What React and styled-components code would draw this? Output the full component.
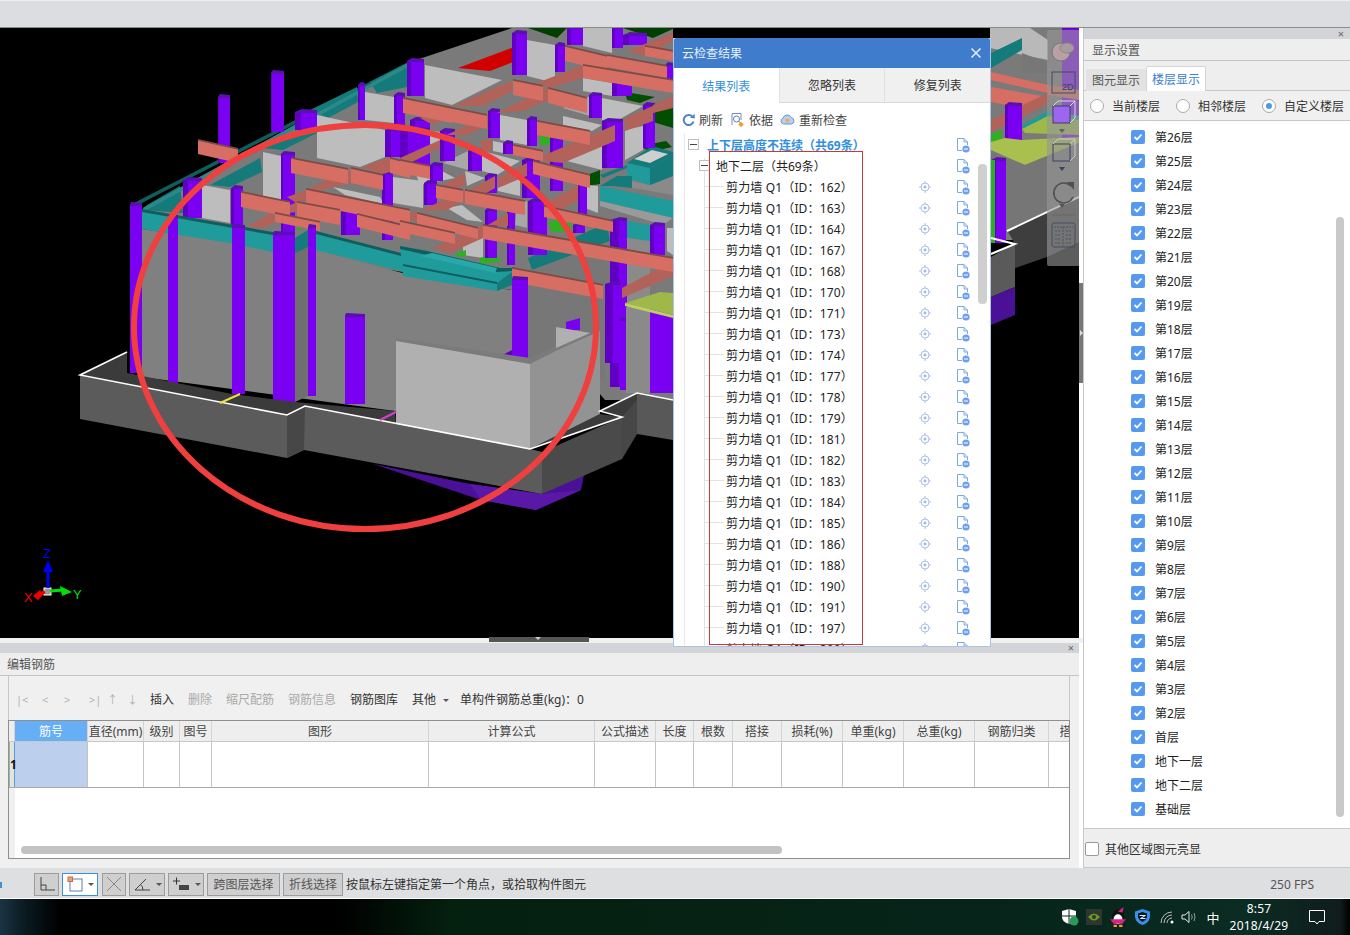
import React from "react";
import styled, { createGlobalStyle } from "styled-components";

const FONT = `"Noto Sans", "Noto Sans CJK SC", "Liberation Sans", sans-serif`;

const Global = createGlobalStyle`
  html, body { margin: 0; padding: 0; background: #fff; }
  body { font-family: ${FONT}; font-size: 12px; color: #222; overflow: hidden; }
  * { box-sizing: border-box; }
`;

const Page = styled.div`
  position: relative;
  width: 1350px;
  height: 935px;
  display: flex;
  flex-direction: column;
  overflow: hidden;
`;
const TopBar = styled.div`
  height: 28px;
  flex: none;
  background: #dcdde0;
  border-top: 1px solid #eee;
  border-bottom: 1px solid #8c8c8c;
`;
const Main = styled.div`
  height: 840px;
  flex: none;
  display: flex;
  background: #fff;
`;
const LeftCol = styled.div`
  width: 1083px;
  flex: none;
  display: flex;
  flex-direction: column;
  background: #fff;
`;
const Viewport = styled.div`
  position: relative;
  width: 1079px;
  height: 610px;
  flex: none;
  background: #000;
  overflow: hidden;
`;
const SceneSvg = styled.svg`
  display: block;
`;
const SideHandle = styled.div`
  position: absolute;
  left: 1079px;
  top: 283px;
  width: 4px;
  height: 100px;
  background: #777;
  &::after {
    content: "";
    position: absolute;
    left: 1px;
    top: 47px;
    border: 3px solid transparent;
    border-left-color: #ddd;
  }
`;
const BottomHandle = styled.div`
  position: absolute;
  left: 489px;
  top: 637px;
  width: 100px;
  height: 5px;
  background: #555;
  &::after {
    content: "";
    position: absolute;
    left: 46px;
    top: 0;
    border: 3px solid transparent;
    border-top-color: #ccc;
  }
`;
const FloatTools = styled.div`
  position: absolute;
  left: 1047px;
  top: 2px;
  width: 32px;
  height: 236px;
  background: rgba(150, 150, 150, 0.62);
  border-radius: 2px 0 0 2px;
  display: flex;
  flex-direction: column;
  align-items: center;
`;
const Gap = styled.div`
  height: 5px;
  flex: none;
  background: #f1f1f1;
`;
const Editor = styled.div`
  flex: 1;
  display: flex;
  flex-direction: column;
  width: 1079px;
  background: #f0f0f0;
`;
const DockStrip = styled.div`
  height: ${(p) => p.$h}px;
  flex: none;
  background: #d3d4d8;
  display: flex;
  justify-content: flex-end;
  align-items: center;
  padding-right: ${(p) => p.$pad}px;
  color: #666;
  font-size: 11px;
  line-height: 10px;
`;
const DockTitle = styled.div`
  height: ${(p) => p.$h}px;
  flex: none;
  padding-left: ${(p) => p.$pad}px;
  padding-top: ${(p) => p.$top || 0}px;
  line-height: ${(p) => p.$h - (p.$top || 0)}px;
  color: #555;
  font-size: 12px;
  background: #eeeeee;
  border-bottom: 1px solid #c2c4c8;
`;
const EditorTools = styled.div`
  height: 44px;
  flex: none;
  margin: 0 9px 0 8px;
  padding: 2px 0 0 7px;
  display: flex;
  align-items: center;
  border-left: 1px solid #c8c8c8;
  border-right: 1px solid #c8c8c8;
`;
const NavGlyph = styled.span`
  color: #b0b0b0;
  font-size: 11px;
  width: ${(p) => p.$w}px;
  flex: none;
`;
const ToolText = styled.span`
  color: ${(p) => (p.$off ? "#aaa" : "#333")};
  margin-right: ${(p) => p.$mr ?? 14}px;
  white-space: nowrap;
  flex: none;
`;
const Caret = styled.span`
  display: inline-block;
  margin-left: ${(p) => p.$ml ?? 7}px;
  vertical-align: middle;
  border: 3px solid transparent;
  border-top-color: #555;
  border-bottom-width: 0;
`;
const Table = styled.div`
  width: 1062px;
  height: 139px;
  margin-left: 8px;
  flex: none;
  display: flex;
  flex-direction: column;
  border: 1px solid #8f8f8f;
  background: #fff;
  overflow: hidden;
`;
const COLS = "6px 73px 56px 36px 32px 217px 166px 61px 38px 39px 49px 61px 61px 71px 74px 70px";
const HeadRow = styled.div`
  display: grid;
  grid-template-columns: ${COLS};
  height: 21px;
  flex: none;
  background: #eeeeee;
  border-bottom: 1px solid #c8c8c8;
`;
const HeadCell = styled.div`
  display: flex;
  align-items: center;
  justify-content: center;
  white-space: nowrap;
  overflow: hidden;
  color: ${(p) => (p.$on ? "#fff" : "#444")};
  background: ${(p) => (p.$on ? "#66aef5" : "transparent")};
  border-right: 1px solid #d4d4d4;
`;
const BodyRow = styled.div`
  display: grid;
  grid-template-columns: ${COLS};
  grid-template-rows: 45px;
  height: 46px;
  flex: none;
  border-bottom: 1px solid #aaa;
  background: #aaa;
`;
const BodyCell = styled.div`
  background: ${(p) => (p.$on ? "#bcd0ee" : "#fff")};
  border-right: 1px solid #c4c4c4;
`;
const RowHead = styled.div`
  position: relative;
  z-index: 1;
  background: #dfe6df;
  border-left: 1px solid #9db89d;
  border-right: 1px solid #5d9adf;
  font-weight: 700;
  font-size: 12px;
  line-height: 46px;
  color: #111;
  white-space: nowrap;
`;
const TableFill = styled.div`
  flex: 1;
  display: flex;
  flex-direction: column;
  justify-content: flex-end;
  padding: 0 0 4px 12px;
  background: linear-gradient(90deg, #f0f0f0 6px, #fff 6px);
`;
const HBar = styled.div`
  width: 761px;
  height: 8px;
  border-radius: 4px;
  background: #c2c2c2;
`;
const RightPanel = styled.div`
  width: 267px;
  flex: none;
  display: flex;
  flex-direction: column;
  border-left: 1px solid #c8c8c8;
  background: #eeeeee;
  border-bottom: 1px solid #c8c8c8;
`;
const TabRow = styled.div`
  height: 30px;
  flex: none;
  display: flex;
  align-items: flex-end;
  padding-left: 2px;
  background: #eeeeee;
  border-bottom: 1px solid #c8c8c8;
`;
const SideTab = styled.div`
  height: ${(p) => (p.$on ? 25 : 22)}px;
  width: 60px;
  margin-bottom: -1px;
  display: flex;
  align-items: center;
  justify-content: center;
  color: ${(p) => (p.$on ? "#3d80d0" : "#555")};
  background: ${(p) => (p.$on ? "#fff" : "#e2e2e2")};
  border: ${(p) => (p.$on ? "1px solid #d5d5d5" : "none")};
  border-bottom: none;
  border-radius: 2px 2px 0 0;
`;
const RadioRow = styled.div`
  height: 30px;
  flex: none;
  display: flex;
  align-items: center;
  padding-left: 6px;
  gap: 16px;
  background: #f0f0f0;
  border-bottom: 1px solid #c8c8c8;
`;
const RadioItem = styled.label`
  display: flex;
  align-items: center;
  gap: 8px;
  color: #333;
  white-space: nowrap;
`;
const RadioDot = styled.span`
  width: 14px;
  height: 14px;
  border-radius: 50%;
  border: 1px solid #a9a9a9;
  background: #fff;
  display: flex;
  align-items: center;
  justify-content: center;
  &::after {
    content: "";
    width: 6px;
    height: 6px;
    border-radius: 50%;
    background: ${(p) => (p.$on ? "#4d97f0" : "transparent")};
  }
`;
const FloorList = styled.div`
  position: relative;
  height: 708px;
  flex: none;
  padding: 4px 0 0 47px;
  background: #fff;
  border-bottom: 1px solid #c8c8c8;
`;
const FloorRow = styled.div`
  height: 24px;
  display: flex;
  align-items: center;
  gap: 10px;
  color: #222;
`;
const Check = styled.span`
  width: 14px;
  height: 14px;
  flex: none;
  border-radius: 2px;
  background: #559af0;
  display: flex;
  align-items: center;
  justify-content: center;
`;
const VBar = styled.div`
  position: absolute;
  left: 252px;
  top: 96px;
  width: 8px;
  height: 600px;
  border-radius: 4px;
  background: #c9c9c9;
`;
const PanelFoot = styled.div`
  flex: 1;
  display: flex;
  align-items: center;
  padding: 2px 0 0 1px;
  gap: 6px;
  color: #333;
`;
const EmptyBox = styled.span`
  width: 14px;
  height: 14px;
  border: 1px solid #999;
  border-radius: 2px;
  background: #fff;
`;
const StatusBar = styled.div`
  height: 30px;
  flex: none;
  display: flex;
  align-items: center;
  background: #dedfe1;
  padding: 2px 0 0 34px;
  position: relative;
`;
const StatusTick = styled.span`
  position: absolute;
  left: 0;
  top: 14px;
  width: 2px;
  height: 6px;
  background: #3f8fd8;
`;
const StatusBtn = styled.button`
  width: ${(p) => p.$w}px;
  height: 23px;
  flex: none;
  margin-right: ${(p) => p.$mr ?? 3}px;
  padding: 0;
  font: inherit;
  color: #555;
  display: flex;
  align-items: center;
  justify-content: center;
  gap: 4px;
  background: ${(p) => (p.$on ? "#fff" : "#cfcfd0")};
  border: 1px solid ${(p) => (p.$on ? "#3d8edc" : "#9c9c9c")};
  white-space: nowrap;
`;
const StatusHint = styled.span`
  color: #333;
  white-space: nowrap;
`;
const Fps = styled.span`
  margin-left: auto;
  margin-right: 36px;
  color: #555;
`;
const Taskbar = styled.div`
  height: 37px;
  flex: none;
  display: flex;
  align-items: center;
  justify-content: flex-end;
  color: #fff;
  background: linear-gradient(90deg, #1b3444 0, #0a1a20 25px, #000 60px, #000 340px, #04200f 450px, #06241a 1000px, #0a2c22 1250px, #101c1c 1340px, #000 1350px);
  border-top: 1px solid #fff;
`;
const Tray = styled.div`
  display: flex;
  align-items: center;
  padding-right: 7px;
`;
const TraySlot = styled.span`
  width: ${(p) => p.$w}px;
  flex: none;
  display: flex;
  justify-content: center;
  align-items: center;
  font-size: ${(p) => p.$fs || 12}px;
`;
const Clock = styled.div`
  width: 64px;
  text-align: center;
  font-size: 12px;
  line-height: 17px;
  letter-spacing: 0.2px;
`;
const Dialog = styled.div`
  position: absolute;
  left: 673px;
  top: 38px;
  width: 318px;
  height: 609px;
  display: flex;
  flex-direction: column;
  background: #fff;
  border: 1px solid #a9c6e8;
  border-top: none;
  overflow: hidden;
  z-index: 3;
`;
const DialogTitle = styled.div`
  height: 30px;
  flex: none;
  display: flex;
  align-items: center;
  justify-content: space-between;
  padding: 0 8px 0 8px;
  color: #e6f0fb;
  background: #3f7ccb;
  border-radius: 2px 2px 0 0;
`;
const DialogTabs = styled.div`
  height: 35px;
  flex: none;
  display: flex;
  background: #f0f0f0;
`;
const DialogTab = styled.div`
  flex: 1;
  display: flex;
  align-items: center;
  justify-content: center;
  color: ${(p) => (p.$on ? "#2f8fe0" : "#333")};
  background: ${(p) => (p.$on ? "#fff" : "#f0f0f0")};
  border-left: ${(p) => (p.$first ? "none" : "1px solid #e2e2e2")};
  border-bottom: ${(p) => (p.$on ? "none" : "1px solid #dadada")};
`;
const DialogTools = styled.div`
  height: 31px;
  flex: none;
  display: flex;
  align-items: center;
  padding: 2px 0 0 8px;
  color: #444;
`;
const DTool = styled.span`
  display: flex;
  align-items: center;
  gap: 4px;
  margin-right: ${(p) => p.$mr}px;
  white-space: nowrap;
`;
const Tree = styled.div`
  position: relative;
  flex: 1;
  overflow: hidden;
  &::before {
    content: "";
    position: absolute;
    left: 10px;
    top: 0;
    bottom: 0;
    border-left: 1px solid #e6e6e6;
  }
  &::after {
    content: "";
    position: absolute;
    left: 30px;
    top: 24px;
    bottom: 0;
    border-left: 1px solid #e2e2e2;
  }
`;
const TreeRow = styled.div`
  position: relative;
  height: 21px;
  display: flex;
  align-items: center;
  padding-left: ${(p) => p.$indent}px;
  padding-right: 20px;
  color: ${(p) => p.$color || "#222"};
  font-weight: ${(p) => (p.$bold ? 700 : 400)};
  white-space: nowrap;
  ${(p) =>
    p.$leaf &&
    `&::before { content: ""; position: absolute; left: 30px; top: 10px; width: 20px; border-top: 1px solid #e2e2e2; }`}
`;
const Expander = styled.span`
  position: relative;
  z-index: 1;
  width: 11px;
  height: 11px;
  flex: none;
  margin-right: ${(p) => p.$mr}px;
  border: 1px solid #c0c0c0;
  background: #fff;
  &::after {
    content: "";
    position: absolute;
    left: 1px;
    right: 1px;
    top: 4px;
    border-top: 1px solid #444;
  }
`;
const TreeLabel = styled.span`
  flex: 1;
  letter-spacing: ${(p) => (p.$wide ? "0.15px" : "0")};
`;
const IconSlot = styled.span`
  width: 14px;
  height: 16px;
  flex: none;
  display: flex;
  margin-left: ${(p) => p.$ml || 0}px;
`;
const RedFrame = styled.div`
  position: absolute;
  left: 35px;
  top: 17px;
  width: 154px;
  height: 494px;
  border: 1px solid #c83a3a;
  pointer-events: none;
  z-index: 2;
`;
const TreeBar = styled.div`
  position: absolute;
  left: 304px;
  top: 30px;
  width: 9px;
  height: 140px;
  border-radius: 4px;
  background: #cfcfcf;
  z-index: 2;
`;

/* ---------- 3D scene (drawing) ---------- */
const C = {
  p: "#7a00f2", pd: "#6100c4", pt: "#5a10b0",
  gl: "#bdbdbd",
  s: "#d66e64", sd: "#b3625a", sl: "#7d4a44",
  t: "#1f9b9b", td: "#157a7a", tk: "#0f5e5e",
};
const poly = (fill, pts) => ({ fill, pts });
const col = (x, y1, w, y2, r = 0.25) => {
  const sw = Math.round(w * r);
  return [
    poly(C.pd, `${x},${y1} ${x + sw},${y1} ${x + sw},${y2} ${x},${y2}`),
    poly(C.p, `${x + sw},${y1} ${x + w},${y1 + 1} ${x + w},${y2} ${x + sw},${y2}`),
    poly(C.pt, `${x},${y1} ${x + sw + 1},${y1 - 3} ${x + w},${y1 - 2} ${x + w},${y1 + 1} ${x + sw},${y1 + 1}`),
  ];
};
const bx = (x1, y1, x2, y2, h) => [
  poly(C.s, `${x1},${y1} ${x2},${y2} ${x2},${y2 + h} ${x1},${y1 + h}`),
  poly(C.sl, `${x1},${y1 - 1} ${x2},${y2 - 1} ${x2},${y2 + 0.8} ${x1},${y1 + 0.8}`),
];
const by = (pts) => [poly(C.sd, pts)];
const light = (pts) => poly(C.gl, pts);

const shapes = [
  // interior
  poly("#7a7a7a", "143,208 410,62 512,28 673,28 673,400 605,400 512,290 142,229"),
  poly("#003f00", "528,28 567,28 557,38"),
  poly("#003f00", "623,28 675,28 653,38"),
  poly("#d00000", "458,68 517,46 518,60 490,71"),
  poly("#004f00", "625,92 655,97 640,103 627,100"),
  poly("#004f00", "653,108 673,106 673,128 653,122"),
  poly("#004f00", "640,146 666,141 672,147 650,152"),
  poly("#004f00", "587,175 600,170 600,184 587,186"),
  // teal wall top (back left)
  poly(C.tk, "130,205 410,61 410,65 130,209"),
  poly(C.td, "147,205 180,186 183,213 143,210"),
  poly(C.td, "210,185 260,158 262,172 230,187"),
  poly(C.td, "263,148 317,121 317,133 283,150"),
  poly(C.td, "310,110 357,87 358,102 328,118"),
  poly(C.td, "370,82 407,63 407,87 377,93"),
  poly("#2a8a8a", "143,208 410,62 410,66 143,212"),
  // light panels
  light("202,185 230,190 230,223 202,218"),
  light("263,152 281,156 281,212 263,210"),
  light("317,115 385,130 385,157 360,167 317,158"),
  light("365,92 394,97 394,123 365,120"),
  light("333,187 380,197 384,204 345,195"),
  light("393,177 423,181 423,208 393,203"),
  light("425,65 502,80 452,105 425,98"),
  light("527,40 555,45 555,83 527,76"),
  light("583,28 612,28 612,53 583,46"),
  light("583,78 612,83 612,96 583,91"),
  light("500,115 527,120 527,145 500,140"),
  light("602,98 643,106 613,123 602,120"),
  light("563,116 602,125 592,131 563,125"),
  poly("#a8a8a8", "563,108 590,96 590,116"),
  light("625,130 643,126 643,150 625,160"),
  light("563,160 602,145 602,170"),
  light("482,151 520,161 497,175 482,171"),
  poly("#a8a8a8", "443,163 468,151 468,170"),
  light("493,141 503,143 503,153 493,151"),
  light("447,208 462,205 483,222 467,220"),
  light("498,181 520,175 520,196 498,191"),
  light("465,171 485,178 467,186"),
  poly("#a8a8a8", "517,205 527,201 527,228 515,225"),
  light("587,185 598,186 598,213 585,208"),
  light("667,228 673,228 673,255 667,251"),
  light("463,241 483,236 483,258 463,255"),
  light("410,127 440,132 440,145 425,147 410,142"),
  light("415,172 440,170 455,178 420,185"),
  // greens
  poly("#2fb020", "540,136 550,135 550,145 540,145"),
  poly("#2fb020", "548,222 570,215 572,232 552,232"),
  poly("#2fb020", "480,258 497,252 500,262 480,264"),
  poly("#2fb020", "456,253 466,250 466,256 456,257"),
  poly("#2fb020", "296,228 303,224 300,231"),
  // right teal boxes
  poly("#8a8a8a", "632,181 650,185 673,176 673,195 650,191 632,188"),
  poly(C.td, "600,175 627,165 627,168 603,178"),
  poly(C.t, "627,163 650,168 650,185 627,178"),
  poly(C.td, "650,168 673,155 673,176 650,185"),
  poly(C.td, "627,163 652,146 673,152 673,155 650,168"),
  poly("#cfcfcf", "634,159 652,150 668,154 650,163"),
  poly(C.t, "600,186 673,201 673,218 600,201"),
  poly(C.td, "600,186 617,176 632,176 632,188 613,186"),
  poly("#9a9a9a", "600,201 673,218 663,225 600,206"),
  poly(C.td, "528,258 607,223 610,241 532,270"),
  poly("#777", "532,270 610,241 610,290 532,280"),
  poly(C.t, "627,221 650,225 650,241 627,238"),
  poly("#8a8a8a", "627,238 650,241 650,393 627,393"),
  // back columns
  ...col(358, 85, 7, 120), ...col(394, 95, 11, 127), ...col(385, 130, 25, 157),
  ...col(407, 61, 17, 96), ...col(512, 33, 15, 75), ...col(555, 45, 10, 72),
  ...col(567, 28, 16, 45), ...col(612, 28, 11, 48), ...col(623, 35, 24, 45),
  ...col(612, 83, 20, 96), ...col(589, 95, 13, 118), ...col(488, 111, 12, 138),
  ...col(527, 119, 10, 146), ...col(602, 121, 21, 168), ...col(643, 105, 12, 148),
  ...col(665, 65, 8, 81), ...col(430, 165, 13, 181), ...col(440, 131, 15, 161),
  ...col(468, 151, 14, 171), ...col(503, 143, 10, 154), ...col(522, 160, 18, 198),
  ...col(424, 183, 13, 205), ...col(485, 176, 12, 193), ...col(550, 138, 13, 191),
  ...col(528, 201, 19, 255), ...col(507, 211, 8, 265), ...col(485, 210, 12, 258),
  ...col(578, 183, 9, 225), ...col(573, 225, 12, 233), ...col(610, 220, 17, 387, 0.5),
  ...col(650, 225, 15, 255), ...col(295, 112, 22, 130), ...col(341, 210, 19, 235),
  ...col(382, 173, 11, 240), ...col(410, 120, 20, 175), ...col(400, 130, 30, 160),
  ...col(231, 188, 12, 227), ...col(183, 180, 19, 218), ...col(281, 154, 14, 233, 0.15),
  ...col(650, 310, 23, 393, 0),
  poly("#8a8a8a", "626,307 650,307 650,393 626,393"),
  // tall stubs
  ...col(218, 97, 12, 163, 0.1),
  ...col(271, 73, 13, 132, 0.1),
  // y beams
  ...by("400,158 440,140 440,148 400,168"),
  ...by("420,118 452,106 452,115 433,125"),
  ...by("453,106 512,81 512,91 483,106"),
  ...by("497,113 548,88 548,100 523,111"),
  ...by("537,83 583,65 583,78 550,88"),
  ...by("583,56 607,55 607,66 583,65"),
  ...by("627,51 673,33 673,41 645,56"),
  ...by("447,135 488,115 488,125 467,135"),
  ...by("533,160 615,125 615,141 563,163"),
  ...by("625,118 653,106 653,121 625,131"),
  ...by("653,105 673,96 673,108 653,113"),
  ...by("480,141 492,139 492,150 483,151"),
  ...by("498,178 527,163 527,176 498,188"),
  ...by("468,191 495,176 495,188 483,195"),
  ...by("420,211 465,190 465,200 447,210"),
  ...by("443,185 465,173 465,185 457,188"),
  ...by("543,205 578,185 578,201 560,210"),
  ...by("433,248 483,225 483,238 450,253"),
  ...by("488,225 508,213 508,226 503,226"),
  ...by("400,218 417,211 417,220 407,221"),
  ...by("622,288 673,261 673,276 622,298"),
  ...by("307,190 350,168 351,183 320,190"),
  ...by("287,197 307,190 306,200 295,202"),
  ...by("247,227 273,212 275,222 263,228"),
  ...by("362,167 390,157 390,172 383,174"),
  ...by("275,212 297,202 297,212 287,213"),
  ...by("397,217 410,212 410,220 400,221"),
  // x beams
  ...bx(198, 140, 238, 149, 14),
  ...bx(291, 158, 348, 169, 15),
  ...bx(351, 168, 383, 175, 15),
  ...bx(390, 158, 410, 163, 15),
  ...bx(241, 192, 290, 202, 15),
  ...bx(306, 189, 410, 210, 15),
  ...bx(297, 202, 340, 210, 15),
  ...bx(275, 213, 320, 222, 9),
  ...bx(357, 214, 410, 227, 13),
  ...bx(565, 46, 607, 56, 15),
  ...bx(607, 55, 667, 66, 12),
  ...bx(583, 65, 673, 80, 13),
  ...bx(645, 46, 673, 51, 10),
  ...bx(513, 80, 543, 86, 15),
  ...bx(548, 88, 587, 98, 15),
  ...bx(403, 98, 452, 108, 15),
  ...bx(452, 108, 487, 115, 14),
  ...bx(537, 121, 590, 131, 14),
  ...bx(513, 145, 543, 151, 10),
  ...bx(400, 160, 430, 166, 13),
  ...bx(533, 161, 590, 175, 13),
  ...bx(436, 185, 463, 190, 13),
  ...bx(465, 190, 525, 201, 14),
  ...bx(544, 206, 613, 221, 11),
  ...bx(417, 213, 478, 228, 11),
  ...bx(400, 221, 455, 233, 11),
  ...bx(483, 225, 673, 258, 14),
  // front wall
  poly("#808080", "142,229 295,252 316,250 410,275 512,290 512,400 395,411 142,377"),
  poly("#6f6f6f", "295,252 308,247 308,396 295,402"),
  poly(C.t, "142,211 230,227 273,235 295,238 295,253 273,252 230,243 142,229"),
  poly(C.tk, "142,209 295,236 295,239 142,212"),
  poly(C.td, "295,238 308,230 308,247 295,253"),
  poly(C.t, "316,232 405,255 405,272 316,250"),
  poly(C.tk, "316,231 405,254 405,257 316,234"),
  // teal block
  poly(C.t, "400,246 427,251 500,268 512,268 512,285 497,291 403,276"),
  poly(C.tk, "400,246 427,251 500,268 512,268 512,271 497,272 427,255 400,249"),
  poly("#28a8a8", "432,253 497,268 495,273 420,256"),
  poly(C.tk, "403,264 497,282 497,284 403,266"),
  poly(C.td, "497,283 512,272 512,285 497,291"),
  // right of front wall
  poly("#777", "528,280 605,293 605,380 528,360"),
  // x beam in front
  ...bx(512, 268, 603, 285, 14),
  // olive
  poly("#9fb84a", "625,303 660,292 673,293 673,315"),
  poly("#c0d060", "625,303 673,315 673,318 625,306"),
  // front columns
  ...col(130, 205, 12, 373, 0),
  ...col(168, 217, 10, 383, 0),
  ...col(232, 227, 13, 394, 0),
  ...col(273, 234, 22, 402, 0),
  ...col(308, 227, 8, 396, 0),
  ...col(345, 316, 20, 404, 0),
  ...col(512, 279, 16, 359, 0),
  ...col(605, 284, 16, 363, 0.5),
  ...col(620, 320, 6, 390, 0),
  poly(C.pd, "497,358 512,350 512,359"),
  poly(C.p, "566,322 580,318 580,330 566,330"),
  // slab
  poly("#3b3b3b", "80,375 127,352 127,373 232,394 295,402 395,411 396,424 530,449 600,414 622,417 530,449 305,406 288,415"),
  poly("#3b3b3b", "600,410 637,393 673,400 673,410 622,417"),
  poly("#4a1096", "373,464 470,484 542,494 585,470 581,490 536,510 481,500"),
  poly("#5a18a8", "470,484 542,494 581,490 536,510 481,500"),
  poly("#5b5b5b", "80,375 287,415 305,406 530,449 542,452 542,494 304,450 287,458 80,419"),
  poly("#474747", "287,415 305,406 304,450 287,458"),
  poly("#4a4a4a", "542,452 622,417 622,459 542,494"),
  poly("#585858", "637,394 673,401 673,440 637,434"),
  poly("#474747", "622,417 637,400 637,434 622,459"),
  // wall corner
  poly("#b0b0b0", "396,340 530,362 530,449 396,424"),
  poly("#939393", "530,362 600,331 600,414 530,449"),
  poly("#7b7b7b", "396,338 530,358 590,330 590,334 530,364 396,341"),
  poly("#b0b0b0", "556,327 590,333 556,348"),
  // right of dialog
  poly("#7a7a7a", "990,28 1079,28 1079,240 990,240"),
  ...col(1062, 28, 17, 197, 0),
  poly("#b9b9b9", "990,28 1030,28 1048,40 1048,60 990,48"),
  poly(C.td, "991,53 1022,38 1022,50 991,68"),
  poly("#777", "1022,53 1048,63 1048,73 1022,73"),
  poly(C.s, "991,72 1048,85 1048,93 991,80"),
  poly(C.s, "991,87 1048,97 1022,108 991,102"),
  poly(C.s, "1048,85 1079,90 1079,100 1048,95"),
  poly(C.sd, "991,120 1048,93 1048,103 1022,117 991,132"),
  ...col(1005, 105, 17, 140, 0.2),
  poly("#2fb020", "991,134 1002,130 1002,138 991,144"),
  poly(C.t, "1022,125 1048,111 1079,116 1079,121 1048,116 1024,129"),
  poly("#9fb84a", "1022,129 1048,116 1079,120 1079,135 1025,133"),
  poly("#a9c04f", "991,142 1005,138 1022,140 1079,137 1079,143 1025,165 991,150"),
  poly("#767676", "991,152 1025,165 1079,143 1079,198 1007,230 991,230"),
  ...col(991, 160, 15, 243, 0.3),
  poly("#2fb020", "991,160 995,160 995,243 991,243"),
  poly("#3e3e3e", "1007,230 1079,198 1079,242 1047,257 1015,268 1015,244"),
  poly("#5a5a5a", "991,257 1015,243 1015,287 991,297"),
  poly("#4a1096", "991,297 1015,287 1015,315 991,325"),
];

const Scene = () => (
  <SceneSvg width="1079" height="610" viewBox="0 28 1079 610">
    {shapes.map((s, i) => (
      <polygon key={i} fill={s.fill} points={s.pts} />
    ))}
    <polyline fill="none" stroke="#fff" strokeWidth="2" points="1007,231 1079,197" />
    <polyline fill="none" stroke="#fff" strokeWidth="2" points="991,238 1015,244 991,254" />
    <polyline fill="none" stroke="#fff" strokeWidth="1.6" points="127,352 80,375 287,415 305,406 530,449" />
    <polyline fill="none" stroke="#fff" strokeWidth="1.6" points="530,449 622,417 600,411 637,393 673,400" />
    <line x1="220" y1="403" x2="240" y2="394" stroke="#e8e040" strokeWidth="2" />
    <line x1="380" y1="420" x2="396" y2="412" stroke="#d040d0" strokeWidth="2" />
    <ellipse cx="365" cy="327" rx="231" ry="202" fill="none" stroke="#ef3f3f" strokeWidth="6" />
    <rect x="44" y="588" width="7" height="7" fill="#999" stroke="#fff" strokeWidth="1" />
    <line x1="48" y1="588" x2="48" y2="570" stroke="#0000f0" strokeWidth="3" />
    <polygon fill="#0000f0" points="48,560 43,572 53,572" />
    <line x1="50" y1="591" x2="64" y2="590" stroke="#00e000" strokeWidth="3" />
    <polygon fill="#00e000" points="72,592 60,586 62,596" />
    <line x1="45" y1="592" x2="36" y2="595" stroke="#f00000" strokeWidth="3" />
    <polygon fill="#f00000" points="33,596 40,590 43,595 38,600" />
    <text x="43" y="558" fill="#0000f0" fontSize="13" fontFamily="Liberation Sans">Z</text>
    <text x="24" y="602" fill="#f00000" fontSize="13" fontFamily="Liberation Sans">X</text>
    <text x="73" y="599" fill="#00e000" fontSize="13" fontFamily="Liberation Sans">Y</text>
  </SceneSvg>
);

const FloatIcons = () => (
  <svg width="32" height="234" viewBox="0 0 32 234" fill="none" stroke="#3e4560" strokeWidth="1">
    <ellipse cx="14" cy="22" rx="9" ry="9" fill="#b8a0a4" stroke="#777" />
    <ellipse cx="20" cy="18" rx="7" ry="5" fill="#aa9aa0" stroke="#888" />
    <rect x="5" y="42" width="23" height="21" stroke="#444c60" />
    <text x="15" y="60" fontSize="9" fill="#33405c" stroke="none" fontFamily="Liberation Sans">2D</text>
    <rect x="6" y="76" width="17" height="17" fill="#9d66f0" stroke="#3c3f66" />
    <path d="M6 76 L11 71 H28 V88 L23 93 M23 76 L28 71" stroke="#d8d8e8" />
    <polygon points="12,99 18,99 15,103" fill="#5d6070" stroke="none" />
    <rect x="6" y="114" width="17" height="17" stroke="#3c3f66" />
    <path d="M6 114 L11 109 H28 V126 L23 131 M23 114 L28 109" stroke="#c9c9cc" />
    <polygon points="12,137 18,137 15,141" fill="#3c3f66" stroke="none" />
    <path d="M24 156 A10 10 0 1 0 26 167" strokeWidth="1.6" stroke="#505050" />
    <polygon points="20,152 27,152 27,160" fill="#505050" stroke="none" />
    <polygon points="12,174 18,174 15,178" fill="#555" stroke="none" />
    <line x1="5" y1="185" x2="28" y2="185" stroke="#666" />
    <rect x="5" y="193" width="23" height="24" rx="2" stroke="#444c60" />
    <path d="M8 201 H13 M8 205 H13 M8 209 H13 M8 213 H13 M19 201 H25 M19 205 H25 M19 209 H25 M19 213 H25 M16 197 V216 M7 197 H26" stroke="#4a5268" strokeDasharray="2 1" />
  </svg>
);

const DocIcon = () => (
  <svg width="14" height="16" viewBox="0 0 14 16" fill="none">
    <path d="M1.5 13.5 V1.5 H8 L11.5 5 V8" stroke="#7da8e8" />
    <path d="M8 1.5 V5 H11.5" stroke="#7da8e8" />
    <path d="M1.5 13.5 H6" stroke="#7da8e8" />
    <circle cx="10" cy="12" r="3.6" fill="#6d9ff0" />
    <path d="M8 12 H12" stroke="#fff" />
  </svg>
);
const LocIcon = () => (
  <svg width="14" height="16" viewBox="0 0 14 16" fill="none" stroke="#a8c0e8">
    <circle cx="7" cy="8" r="4" />
    <circle cx="7" cy="8" r="1.4" fill="#9ab8e8" stroke="none" />
    <path d="M7 2 V4 M7 12 V14 M1 8 H3 M11 8 H13" />
  </svg>
);
const RefreshIcon = () => (
  <svg width="13" height="14" viewBox="0 0 13 14" fill="none">
    <path d="M11 4.5 A5 5 0 1 0 11.5 8.5" stroke="#4d84c8" strokeWidth="2" />
    <polygon points="8,4.8 12.8,5.5 12.6,0.8" fill="#4d84c8" />
  </svg>
);
const BasisIcon = () => (
  <svg width="15" height="16" viewBox="0 0 14 16" fill="none">
    <path d="M1.5 13 V1.5 H10.5 V8" stroke="#7290c0" />
    <circle cx="6" cy="7" r="3" stroke="#5d80b8" />
    <path d="M8 9 L11 12" stroke="#5d80b8" />
    <rect x="8.5" y="10.5" width="4" height="4" fill="#f0a030" transform="rotate(45 10.5 12.5)" />
  </svg>
);
const CloudIcon = () => (
  <svg width="15" height="13" viewBox="0 0 15 13" fill="#b8d0ee" stroke="#6d94c8">
    <path d="M3.5 11 A3 3 0 0 1 3 5.2 A4.5 4.5 0 0 1 11.4 4.6 A3.3 3.3 0 0 1 11.5 11 Z" />
    <circle cx="7.5" cy="7.5" r="2" fill="#f0a860" stroke="none" />
  </svg>
);
const CheckMark = () => (
  <svg width="10" height="10" viewBox="0 0 10 10" fill="none">
    <path d="M1.5 5 L4 7.5 L8.5 2.5" stroke="#fff" strokeWidth="1.8" />
  </svg>
);

const ids = [162, 163, 164, 167, 168, 170, 171, 173, 174, 177, 178, 179, 181, 182, 183, 184, 185, 186, 188, 190, 191, 197, 200];
const floors = [
  ...Array.from({ length: 25 }, (_, i) => `第${26 - i}层`),
  "首层", "地下一层", "地下二层", "基础层",
];
const headers = ["", "筋号", "直径(mm)", "级别", "图号", "图形", "计算公式", "公式描述", "长度", "根数", "搭接", "损耗(%)", "单重(kg)", "总重(kg)", "钢筋归类", "搭接形式"];

export default function App() {
  return (
    <Page>
      <Global />
      <TopBar />
      <Main>
        <LeftCol>
          <Viewport>
            <Scene />
            <FloatTools>
              <FloatIcons />
            </FloatTools>
          </Viewport>
          <Gap />
          <Editor>
            <DockStrip $h={10} $pad={5}>×</DockStrip>
            <DockTitle $h={23} $pad={7}>编辑钢筋</DockTitle>
            <EditorTools>
              <NavGlyph $w={26}>|&lt;</NavGlyph>
              <NavGlyph $w={22}>&lt;</NavGlyph>
              <NavGlyph $w={25}>&gt;</NavGlyph>
              <NavGlyph $w={18}>&gt;|</NavGlyph>
              <NavGlyph $w={20}>↑</NavGlyph>
              <NavGlyph $w={23}>↓</NavGlyph>
              <ToolText>插入</ToolText>
              <ToolText $off>删除</ToolText>
              <ToolText $off>缩尺配筋</ToolText>
              <ToolText $off>钢筋信息</ToolText>
              <ToolText>钢筋图库</ToolText>
              <ToolText $mr={11}>其他<Caret /></ToolText>
              <ToolText>单构件钢筋总重(kg)：0</ToolText>
            </EditorTools>
            <Table>
              <HeadRow>
                {headers.map((h, i) => (
                  <HeadCell key={i} $on={i === 1}>{h}</HeadCell>
                ))}
              </HeadRow>
              <BodyRow>
                <RowHead>1</RowHead>
                {headers.slice(1).map((h, i) => (
                  <BodyCell key={i} $on={i === 0} />
                ))}
              </BodyRow>
              <TableFill>
                <HBar />
              </TableFill>
            </Table>
          </Editor>
        </LeftCol>
        <RightPanel>
          <DockStrip $h={11} $pad={6}>×</DockStrip>
          <DockTitle $h={22} $top={1} $pad={8}>显示设置</DockTitle>
          <TabRow>
            <SideTab>图元显示</SideTab>
            <SideTab $on>楼层显示</SideTab>
          </TabRow>
          <RadioRow>
            <RadioItem><RadioDot />当前楼层</RadioItem>
            <RadioItem><RadioDot />相邻楼层</RadioItem>
            <RadioItem><RadioDot $on />自定义楼层</RadioItem>
          </RadioRow>
          <FloorList>
            {floors.map((f) => (
              <FloorRow key={f}>
                <Check><CheckMark /></Check>
                {f}
              </FloorRow>
            ))}
            <VBar />
          </FloorList>
          <PanelFoot>
            <EmptyBox />
            其他区域图元亮显
          </PanelFoot>
        </RightPanel>
      </Main>
      <StatusBar>
        <StatusTick />
        <StatusBtn $w={25}>
          <svg width="18" height="16" viewBox="0 0 18 16" fill="none" stroke="#444"><path d="M3 1 V14 H17 M3 9 H8 V14" /></svg>
        </StatusBtn>
        <StatusBtn $w={36} $mr={4} $on>
          <svg width="16" height="16" viewBox="0 0 16 16" fill="none"><rect x="3" y="3" width="12" height="12" stroke="#5d80b0" /><rect x="1" y="1" width="4.5" height="4.5" fill="#f0a070" stroke="#c07040" /></svg>
          <Caret $ml={1} />
        </StatusBtn>
        <StatusBtn $w={24}>
          <svg width="20" height="20" viewBox="0 0 20 20" stroke="#888" fill="none"><path d="M3 3 L17 17 M17 3 L3 17" /></svg>
        </StatusBtn>
        <StatusBtn $w={36}>
          <svg width="18" height="16" viewBox="0 0 18 16" fill="none" stroke="#444"><path d="M2 14 H17 M2 14 L13 3" /><path d="M7 8 Q10 10 10 14" /></svg>
          <Caret $ml={1} />
        </StatusBtn>
        <StatusBtn $w={36}>
          <svg width="18" height="16" viewBox="0 0 18 16"><path d="M1 5 H8 M4.5 1.5 V8.5" stroke="#333" fill="none" /><rect x="7" y="9" width="10" height="5" fill="#444" /></svg>
          <Caret $ml={1} />
        </StatusBtn>
        <StatusBtn $w={73}>跨图层选择</StatusBtn>
        <StatusBtn $w={60}>折线选择</StatusBtn>
        <StatusHint>按鼠标左键指定第一个角点，或拾取构件图元</StatusHint>
        <Fps>250 FPS</Fps>
      </StatusBar>
      <Taskbar>
        <Tray>
          <TraySlot $w={24}>
            <svg width="18" height="18" viewBox="0 0 18 18"><path d="M8 1 L15 3 V9 Q15 14 8 16 Q1 14 1 9 V3 Z" fill="#fff" /><path d="M8 1 V16 M1 8 H15" stroke="#0c241a" /><circle cx="13" cy="13" r="4.5" fill="#2a9a5a" /></svg>
          </TraySlot>
          <TraySlot $w={24}>
            <svg width="16" height="16" viewBox="0 0 16 16"><rect width="16" height="16" fill="#2f362f" /><path d="M2 8 Q8 1 14 8 Q8 15 2 8 Z" fill="#6a9a20" /><circle cx="8" cy="8" r="2" fill="#2f362f" /></svg>
          </TraySlot>
          <TraySlot $w={24}>
            <svg width="18" height="20" viewBox="0 0 16 18"><ellipse cx="8" cy="9" rx="5.5" ry="7" fill="#111" /><ellipse cx="8" cy="11" rx="4" ry="4.5" fill="#fff" /><path d="M1 11 L15 11 L12 15 H4 Z" fill="#e0208a" /><path d="M8 4 L13 0 L12 5 Z" fill="#e0208a" /><path d="M4 17 H7 M9 17 H12" stroke="#f0a020" strokeWidth="2" /></svg>
          </TraySlot>
          <TraySlot $w={24}>
            <svg width="17" height="18" viewBox="0 0 17 18"><path d="M8.5 1 L16 3.5 V9 Q15 15 8.5 17 Q2 15 1 9 V3.5 Z" fill="#3a8ef0" /><path d="M8.5 4 L13 5.5 V9 Q12 12.5 8.5 14 Q5 12.5 4 9 V5.5 Z" fill="#061a14" /><path d="M5.5 7.5 H11.5 L6.5 10.5 H11.5" stroke="#dcecff" fill="none" /></svg>
          </TraySlot>
          <TraySlot $w={25}>
            <svg width="16" height="14" viewBox="0 0 16 14" fill="none" stroke="#bbb"><path d="M2 13 A11 11 0 0 1 13 2 M5 13 A8 8 0 0 1 13 5 M8 13 A5 5 0 0 1 13 8" /><circle cx="13" cy="12" r="1.5" fill="#fff" stroke="none" /></svg>
          </TraySlot>
          <TraySlot $w={20}>
            <svg width="17" height="14" viewBox="0 0 17 14" fill="none" stroke="#e8e8e8"><path d="M1 5 H4 L8 1.5 V12.5 L4 9 H1 Z" /><path d="M10.5 4.5 Q12 7 10.5 9.5 M13 3 Q15 7 13 11" stroke="#999" /></svg>
          </TraySlot>
          <TraySlot $w={28} $fs={13}>中</TraySlot>
          <Clock>8:57<br />2018/4/29</Clock>
          <TraySlot $w={52}>
            <svg width="18" height="17" viewBox="0 0 18 17" fill="none" stroke="#fff"><path d="M1.5 1.5 H16.5 V12.5 H11 L9 15 L7 12.5 H1.5 Z" /></svg>
          </TraySlot>
        </Tray>
      </Taskbar>
      <SideHandle />
      <BottomHandle />
      <Dialog>
        <DialogTitle>
          云检查结果
          <svg width="12" height="12" viewBox="0 0 12 12" stroke="#dfeaf8" strokeWidth="1.6"><path d="M1.5 1.5 L10.5 10.5 M10.5 1.5 L1.5 10.5" /></svg>
        </DialogTitle>
        <DialogTabs>
          <DialogTab $on $first>结果列表</DialogTab>
          <DialogTab>忽略列表</DialogTab>
          <DialogTab>修复列表</DialogTab>
        </DialogTabs>
        <DialogTools>
          <DTool $mr={7}><RefreshIcon />刷新</DTool>
          <DTool $mr={7}><BasisIcon />依据</DTool>
          <DTool $mr={0}><CloudIcon />重新检查</DTool>
        </DialogTools>
        <Tree>
          <TreeRow $indent={14} $color="#2f8fe0" $bold>
            <Expander $mr={8} />
            <TreeLabel>上下层高度不连续（共69条）</TreeLabel>
            <IconSlot><DocIcon /></IconSlot>
          </TreeRow>
          <TreeRow $indent={25}>
            <Expander $mr={6} />
            <TreeLabel>地下二层（共69条）</TreeLabel>
            <IconSlot><DocIcon /></IconSlot>
          </TreeRow>
          {ids.map((id) => (
            <TreeRow key={id} $indent={52} $leaf>
              <TreeLabel $wide>剪力墙 Q1（ID：{id}）</TreeLabel>
              <IconSlot><LocIcon /></IconSlot>
              <IconSlot $ml={24}><DocIcon /></IconSlot>
            </TreeRow>
          ))}
          <RedFrame />
          <TreeBar />
        </Tree>
      </Dialog>
    </Page>
  );
}
